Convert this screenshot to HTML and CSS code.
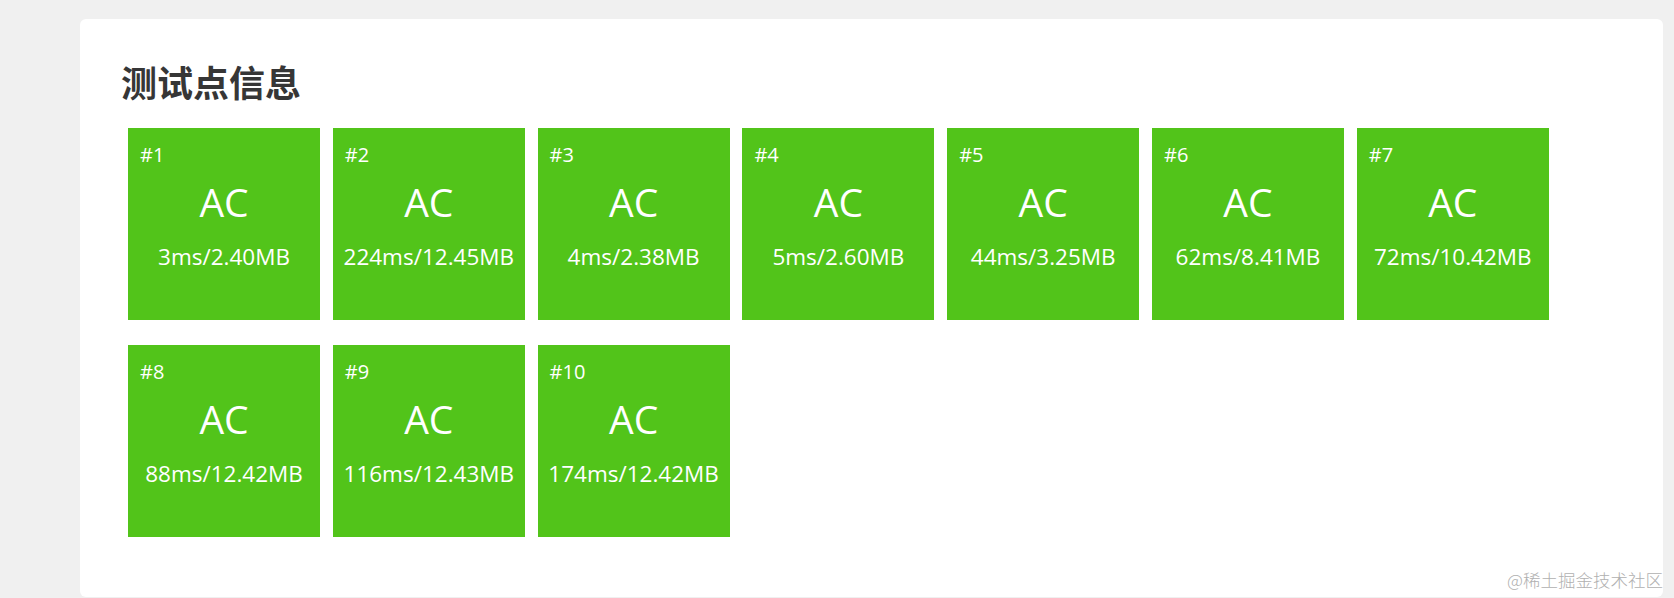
FILE: index.html
```html
<!DOCTYPE html>
<html lang="zh">
<head>
<meta charset="utf-8">
<title>测试点信息</title>
<link rel="stylesheet" href="styles.css">
</head>
<body>
<div class="card">
  <h2 class="title">测试点信息</h2>
  <div class="cases">
    <div class="case"><div class="num">#1</div><div class="res">AC</div><div class="stat">3ms/2.40MB</div></div>
    <div class="case"><div class="num">#2</div><div class="res">AC</div><div class="stat">224ms/12.45MB</div></div>
    <div class="case"><div class="num">#3</div><div class="res">AC</div><div class="stat">4ms/2.38MB</div></div>
    <div class="case"><div class="num">#4</div><div class="res">AC</div><div class="stat">5ms/2.60MB</div></div>
    <div class="case"><div class="num">#5</div><div class="res">AC</div><div class="stat">44ms/3.25MB</div></div>
    <div class="case"><div class="num">#6</div><div class="res">AC</div><div class="stat">62ms/8.41MB</div></div>
    <div class="case"><div class="num">#7</div><div class="res">AC</div><div class="stat">72ms/10.42MB</div></div>
    <div class="case"><div class="num">#8</div><div class="res">AC</div><div class="stat">88ms/12.42MB</div></div>
    <div class="case"><div class="num">#9</div><div class="res">AC</div><div class="stat">116ms/12.43MB</div></div>
    <div class="case"><div class="num">#10</div><div class="res">AC</div><div class="stat">174ms/12.42MB</div></div>
  </div>
</div>
<div class="watermark">@稀土掘金技术社区</div>
</body>
</html>
```
FILE: styles.css
```css
html, body {
  margin: 0;
  padding: 0;
}
body {
  background: #f0f0f0;
  font-family: "Open Sans", "Noto Sans", "Noto Sans CJK SC", sans-serif;
  height: 598px;
  overflow: hidden;
  position: relative;
}
.card {
  margin: 19px 11px 0 80px;
  height: 578px;
  box-sizing: border-box;
  background: #fff;
  border-radius: 6px;
  padding: 44px 40px 0 41px;
}
.title {
  margin: 0;
  font-family: "Noto Sans CJK SC", sans-serif;
  font-weight: 700;
  font-size: 36px;
  line-height: 36px;
  color: #363636;
}
.cases {
  margin-top: 29px;
  padding-left: 7px;
  display: flex;
  flex-wrap: wrap;
  column-gap: 12.8px;
  row-gap: 25px;
}
.case {
  width: 192px;
  height: 192px;
  box-sizing: border-box;
  background: #52c41a;
  color: #fff;
  padding: 17px 0 0 0;
}
.num {
  font-size: 20px;
  line-height: 20px;
  padding-left: 12px;
}
.res {
  margin-top: 17px;
  font-size: 39px;
  line-height: 39px;
  text-align: center;
}
.stat {
  margin-top: 25px;
  font-size: 22.5px;
  line-height: 22px;
  text-align: center;
  white-space: nowrap;
}
.watermark {
  position: absolute;
  right: 11px;
  bottom: 7px;
  font-family: "Noto Sans CJK SC", sans-serif;
  font-weight: 300;
  font-size: 17.5px;
  line-height: 22px;
  color: #b0b0b0;
  text-shadow: 0 0 2px #fff;
}
```
